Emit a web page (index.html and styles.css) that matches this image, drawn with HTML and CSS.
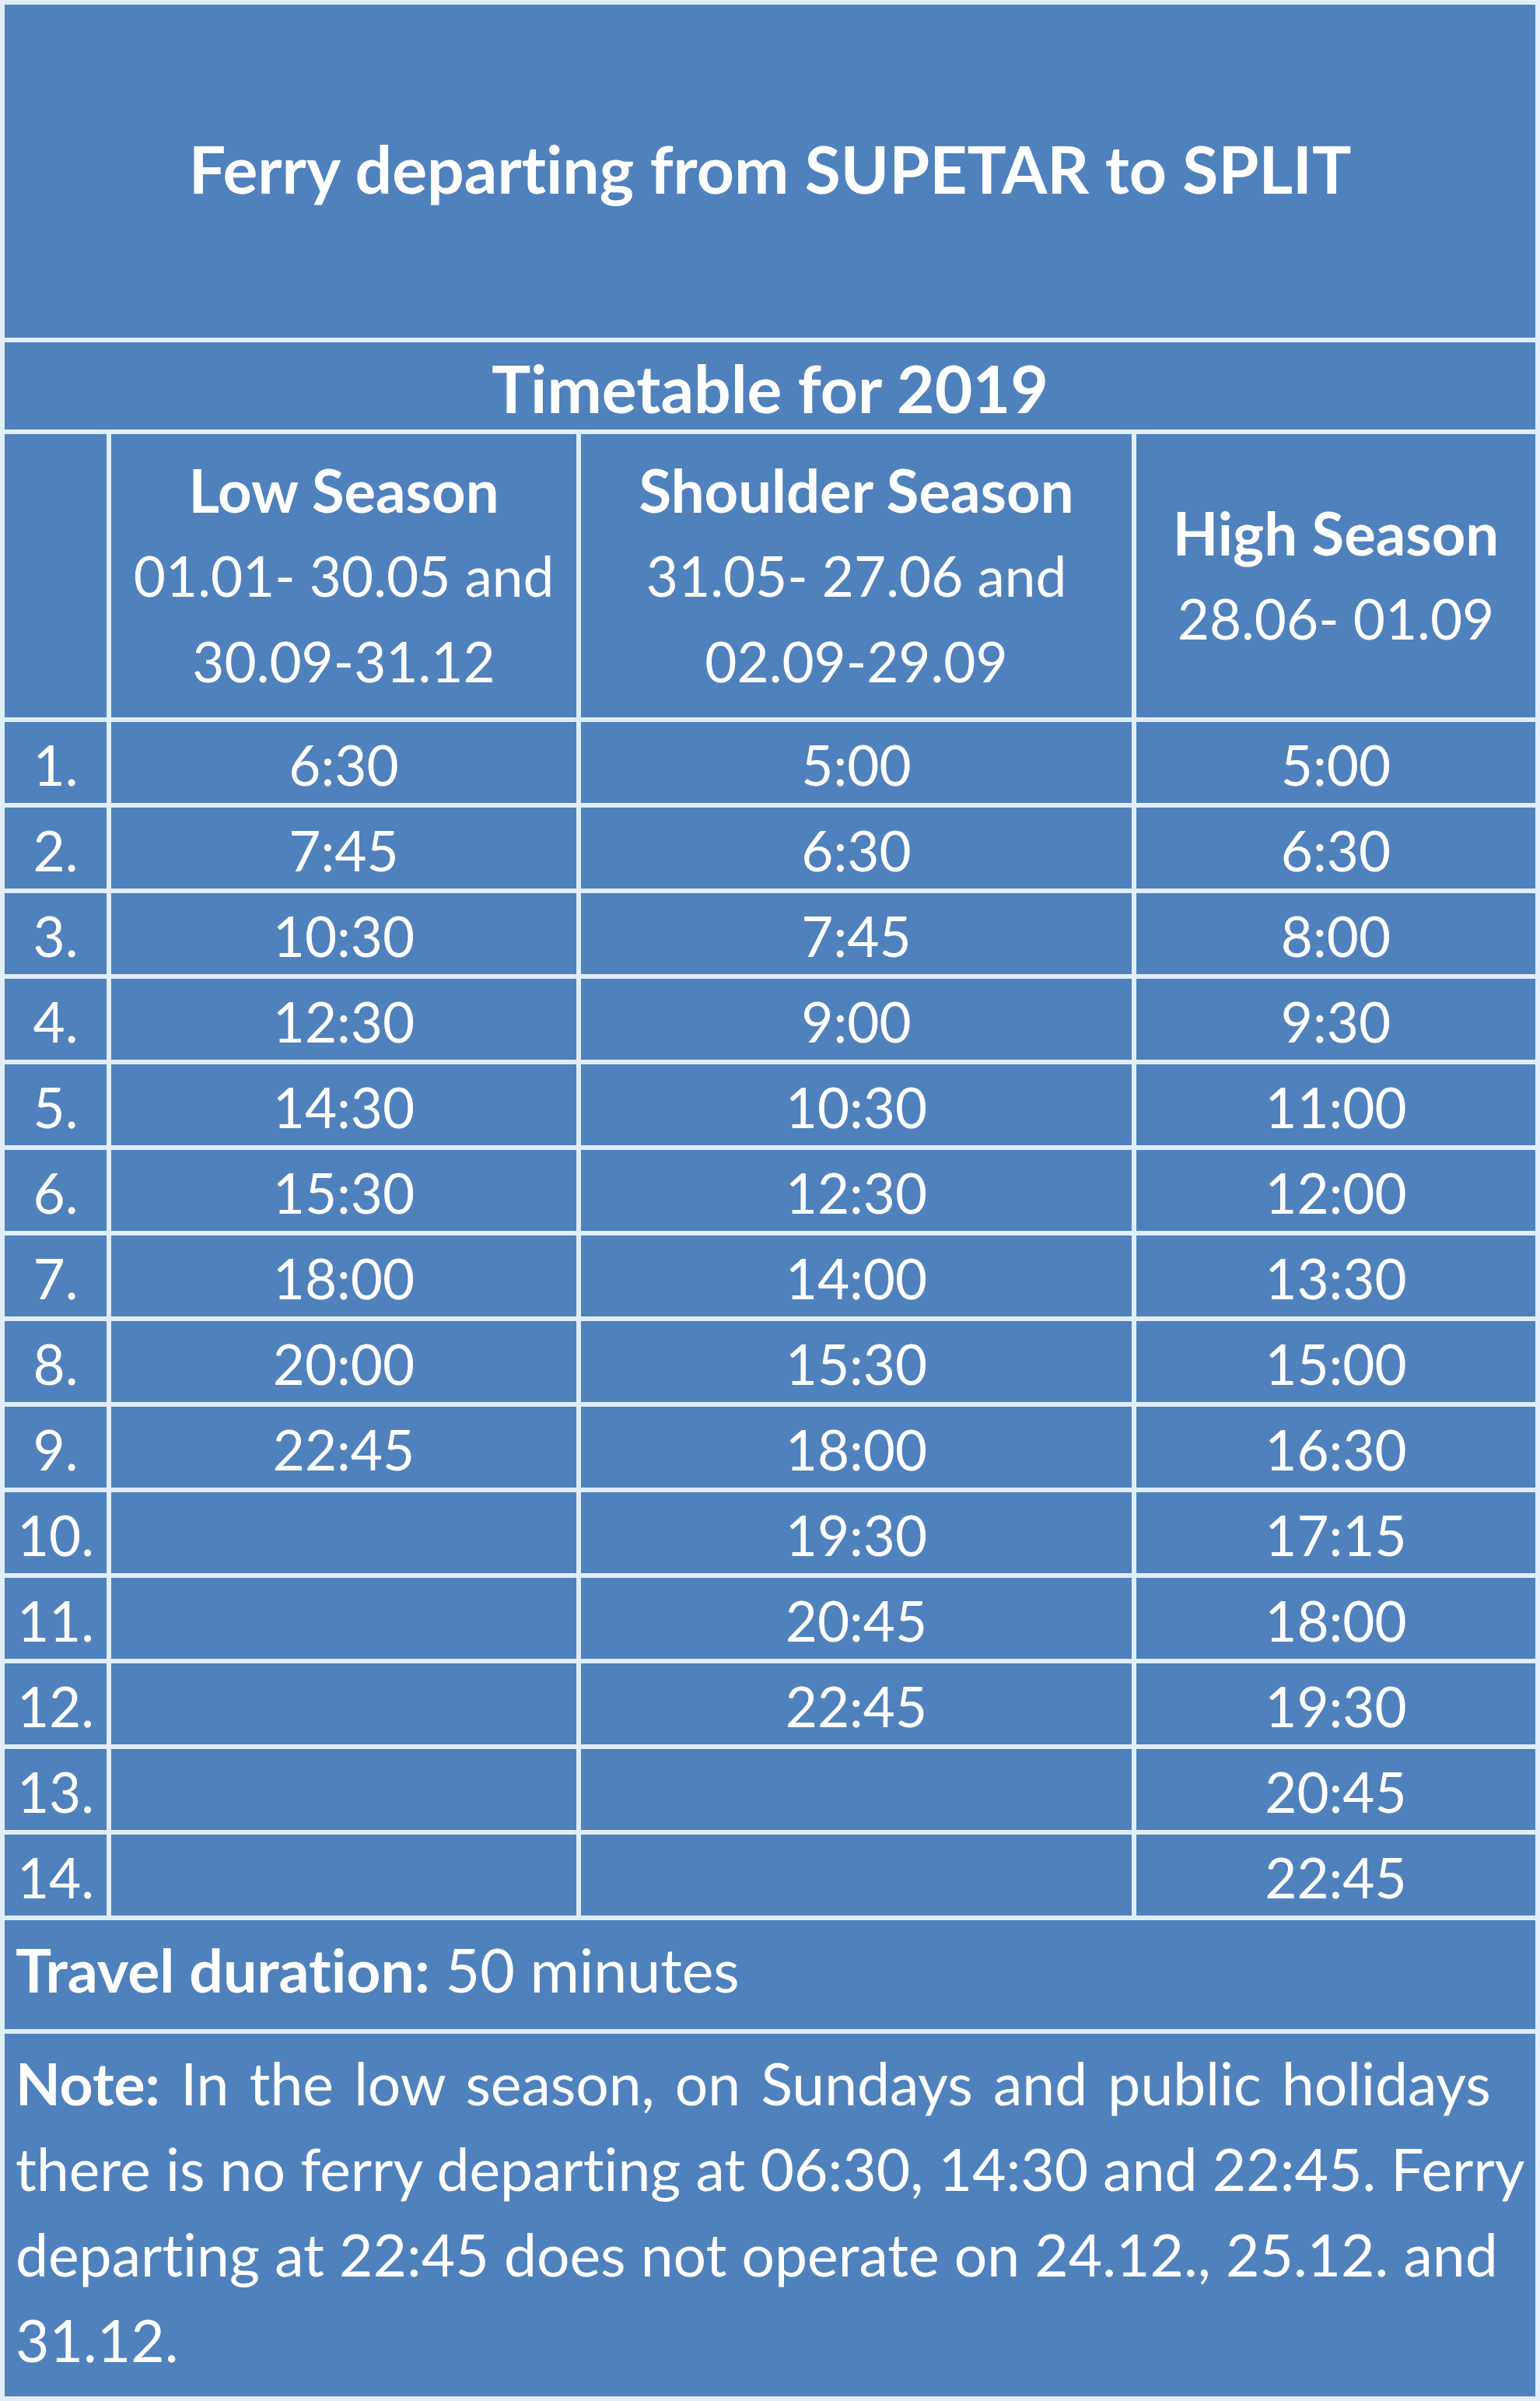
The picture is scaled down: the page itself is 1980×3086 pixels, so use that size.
FILE: index.html
```html
<!DOCTYPE html>
<html lang="en">
<head>
<meta charset="utf-8">
<title>Ferry departing from SUPETAR to SPLIT</title>
<link rel="stylesheet" href="styles.css">
</head>
<body>
<div class="timetable">
  <div class="cell title span-all">Ferry departing from SUPETAR to SPLIT</div>
  <div class="cell subtitle span-all">Timetable for 2019</div>

  <div class="cell head"></div>
  <div class="cell head"><span class="season">Low Season</span><span class="dates">01.01- 30.05 and</span><span class="dates">30.09-31.12</span></div>
  <div class="cell head"><span class="season">Shoulder Season</span><span class="dates">31.05- 27.06 and</span><span class="dates">02.09-29.09</span></div>
  <div class="cell head"><span class="season">High Season</span><span class="dates">28.06- 01.09</span></div>

  <div class="cell num">1.</div><div class="cell time">6:30</div><div class="cell time">5:00</div><div class="cell time">5:00</div>
  <div class="cell num">2.</div><div class="cell time">7:45</div><div class="cell time">6:30</div><div class="cell time">6:30</div>
  <div class="cell num">3.</div><div class="cell time">10:30</div><div class="cell time">7:45</div><div class="cell time">8:00</div>
  <div class="cell num">4.</div><div class="cell time">12:30</div><div class="cell time">9:00</div><div class="cell time">9:30</div>
  <div class="cell num">5.</div><div class="cell time">14:30</div><div class="cell time">10:30</div><div class="cell time">11:00</div>
  <div class="cell num">6.</div><div class="cell time">15:30</div><div class="cell time">12:30</div><div class="cell time">12:00</div>
  <div class="cell num">7.</div><div class="cell time">18:00</div><div class="cell time">14:00</div><div class="cell time">13:30</div>
  <div class="cell num">8.</div><div class="cell time">20:00</div><div class="cell time">15:30</div><div class="cell time">15:00</div>
  <div class="cell num">9.</div><div class="cell time">22:45</div><div class="cell time">18:00</div><div class="cell time">16:30</div>
  <div class="cell num">10.</div><div class="cell time"></div><div class="cell time">19:30</div><div class="cell time">17:15</div>
  <div class="cell num">11.</div><div class="cell time"></div><div class="cell time">20:45</div><div class="cell time">18:00</div>
  <div class="cell num">12.</div><div class="cell time"></div><div class="cell time">22:45</div><div class="cell time">19:30</div>
  <div class="cell num">13.</div><div class="cell time"></div><div class="cell time"></div><div class="cell time">20:45</div>
  <div class="cell num">14.</div><div class="cell time"></div><div class="cell time"></div><div class="cell time">22:45</div>

  <div class="cell info duration span-all"><b>Travel duration:</b> 50 minutes</div>
  <div class="cell info note span-all"><span class="note-first"><b>Note:</b> In the low season, on Sundays and public holidays</span><br>there is no ferry departing at 06:30, 14:30 and 22:45. Ferry<br>departing at 22:45 does not operate on 24.12., 25.12. and<br>31.12.</div>
</div>
</body>
</html>
```

FILE: styles.css
```css
html, body {
  margin: 0;
  padding: 0;
  background: #e1edf8;
}

.timetable {
  display: grid;
  grid-template-columns: 131px 598px 708px 513px;
  grid-template-rows: 428px 112px 364px repeat(14, 104px) 140px 466px;
  gap: 6px;
  padding: 6px;
  width: 1980px;
  height: 3086px;
  box-sizing: border-box;
  background: #e1edf8;
  font-family: Lato, "Open Sans", "Liberation Sans", sans-serif;
  font-size: 71px;
  line-height: 110px;
  color: #ffffff;
  font-variant-ligatures: none;
}

.cell {
  background: #4f81bd;
  white-space: nowrap;
  overflow: hidden;
}

.span-all {
  grid-column: 1 / -1;
}

.title,
.subtitle {
  display: flex;
  align-items: center;
  justify-content: center;
  font-weight: 700;
  font-size: 84px;
}

.title {
  padding-bottom: 6px;
}

.subtitle {
  padding-top: 6px;
}

.head {
  display: flex;
  flex-direction: column;
  justify-content: center;
  align-items: center;
}

.season {
  font-weight: 700;
  font-size: 76px;
}

.dates {
  font-size: 71px;
}

.num {
  display: flex;
  align-items: center;
  justify-content: center;
  padding-top: 6px;
}

.time {
  display: flex;
  align-items: center;
  justify-content: center;
  padding-top: 6px;
}

.info {
  padding: 8px 0 0 14px;
}

.info b {
  font-weight: 700;
}

.duration {
  font-size: 77px;
}

.note {
  font-size: 75px;
}

.note-first {
  word-spacing: 7px;
}
```
